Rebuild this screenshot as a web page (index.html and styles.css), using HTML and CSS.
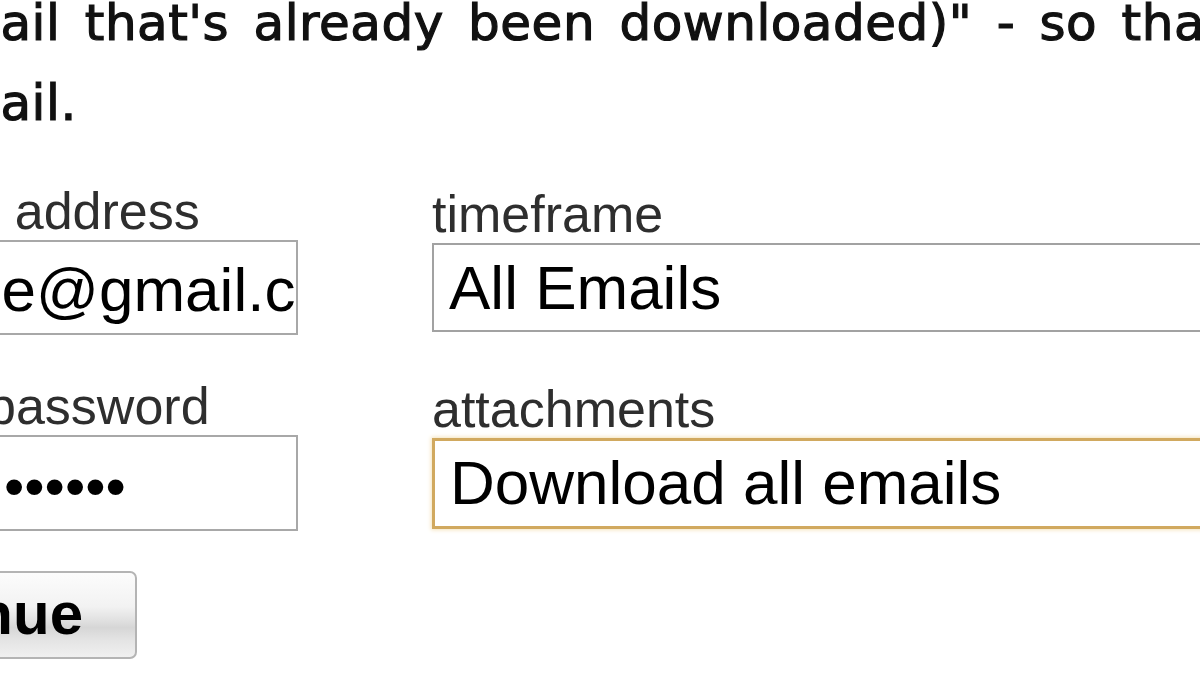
FILE: index.html
```html
<!DOCTYPE html>
<html lang="en">
<head>
<meta charset="utf-8">
<title>Download emails</title>
<link rel="stylesheet" href="styles.css">
</head>
<body>
<div class="page">
  <div class="intro">
    <div class="intro-line">email that's already been downloaded)" - so that you only download new email</div>
    <div class="intro-line">email.</div>
  </div>
  <form class="form">
    <div class="col col-left">
      <div class="field">
        <div class="label label-address">email address</div>
        <div class="box box-email">someone@gmail.com</div>
      </div>
      <div class="field field-gap">
        <div class="label label-password">password</div>
        <div class="box box-password"><span class="dots">&#8226;&#8226;&#8226;&#8226;&#8226;&#8226;</span></div>
      </div>
      <div class="button">Continue</div>
    </div>
    <div class="col col-right">
      <div class="field">
        <div class="label">timeframe</div>
        <div class="box box-select">All Emails</div>
      </div>
      <div class="field field-gap-right">
        <div class="label">attachments</div>
        <div class="box box-select box-focus">Download all emails</div>
      </div>
    </div>
  </form>
</div>
</body>
</html>
```

FILE: styles.css
```css
html, body {
  margin: 0;
  padding: 0;
  background: #ffffff;
}
body {
  width: 1200px;
  height: 675px;
  overflow: hidden;
}
.page {
  width: 1200px;
  height: 675px;
  overflow: hidden;
}
.intro {
  margin-top: -17px;
  margin-left: -80px;
  font-family: "DejaVu Sans", Verdana, sans-serif;
  font-size: 50px;
  line-height: 80px;
  color: #111111;
  letter-spacing: 0.5px;
  word-spacing: 8px;
  -webkit-text-stroke: 1.2px #111111;
}
.intro-line {
  white-space: nowrap;
}
.form {
  display: grid;
  grid-template-columns: 560px 900px;
  column-gap: 134px;
  margin-top: 39px;
  margin-left: -262px;
}
.col {
  display: flex;
  flex-direction: column;
  align-items: flex-start;
}
.col-right {
  padding-top: 3px;
}
.field {
  display: flex;
  flex-direction: column;
  align-self: stretch;
}
.field-gap {
  margin-top: 42px;
}
.field-gap-right {
  margin-top: 48px;
}
.label {
  font-family: "Liberation Sans", Arial, sans-serif;
  font-size: 52px;
  line-height: 58px;
  color: #2e2e2e;
  white-space: nowrap;
}
.label-address {
  padding-left: 138px;
}
.label-password {
  padding-left: 249px;
}
.box {
  font-family: "Liberation Sans", Arial, sans-serif;
  font-size: 62px;
  line-height: 70px;
  color: #000000;
  background: #ffffff;
  border: 2px solid #a8a8a8;
  white-space: nowrap;
  overflow: hidden;
}
.box-email,
.box-password {
  padding: 13px 3px 8px 41px;
}
.box-password {
  padding-left: 264px;
}
.dots {
  font-size: 58px;
  letter-spacing: 0;
}
.box-select {
  padding: 8px 15px 7px 15px;
  border-color: #a2a2a2;
}
.box-focus {
  border: 3px solid #d1a95f;
  box-shadow: 0 0 4px 1px #f4e3bd;
  padding-top: 7px;
  padding-bottom: 8px;
}
.button {
  margin-top: 40px;
  width: 399px;
  box-sizing: border-box;
  padding: 9px 52px 11px 0;
  text-align: right;
  font-family: "Liberation Sans", Arial, sans-serif;
  font-weight: bold;
  font-size: 60px;
  line-height: 64px;
  color: #000000;
  border: 2px solid #b4b4b4;
  border-radius: 7px;
  background: linear-gradient(#fcfcfc 0%, #f2f2f2 40%, #e2e2e2 55%, #d6d6d6 65%, #e4e4e4 80%, #f0f0f0 100%);
  white-space: nowrap;
}
```
